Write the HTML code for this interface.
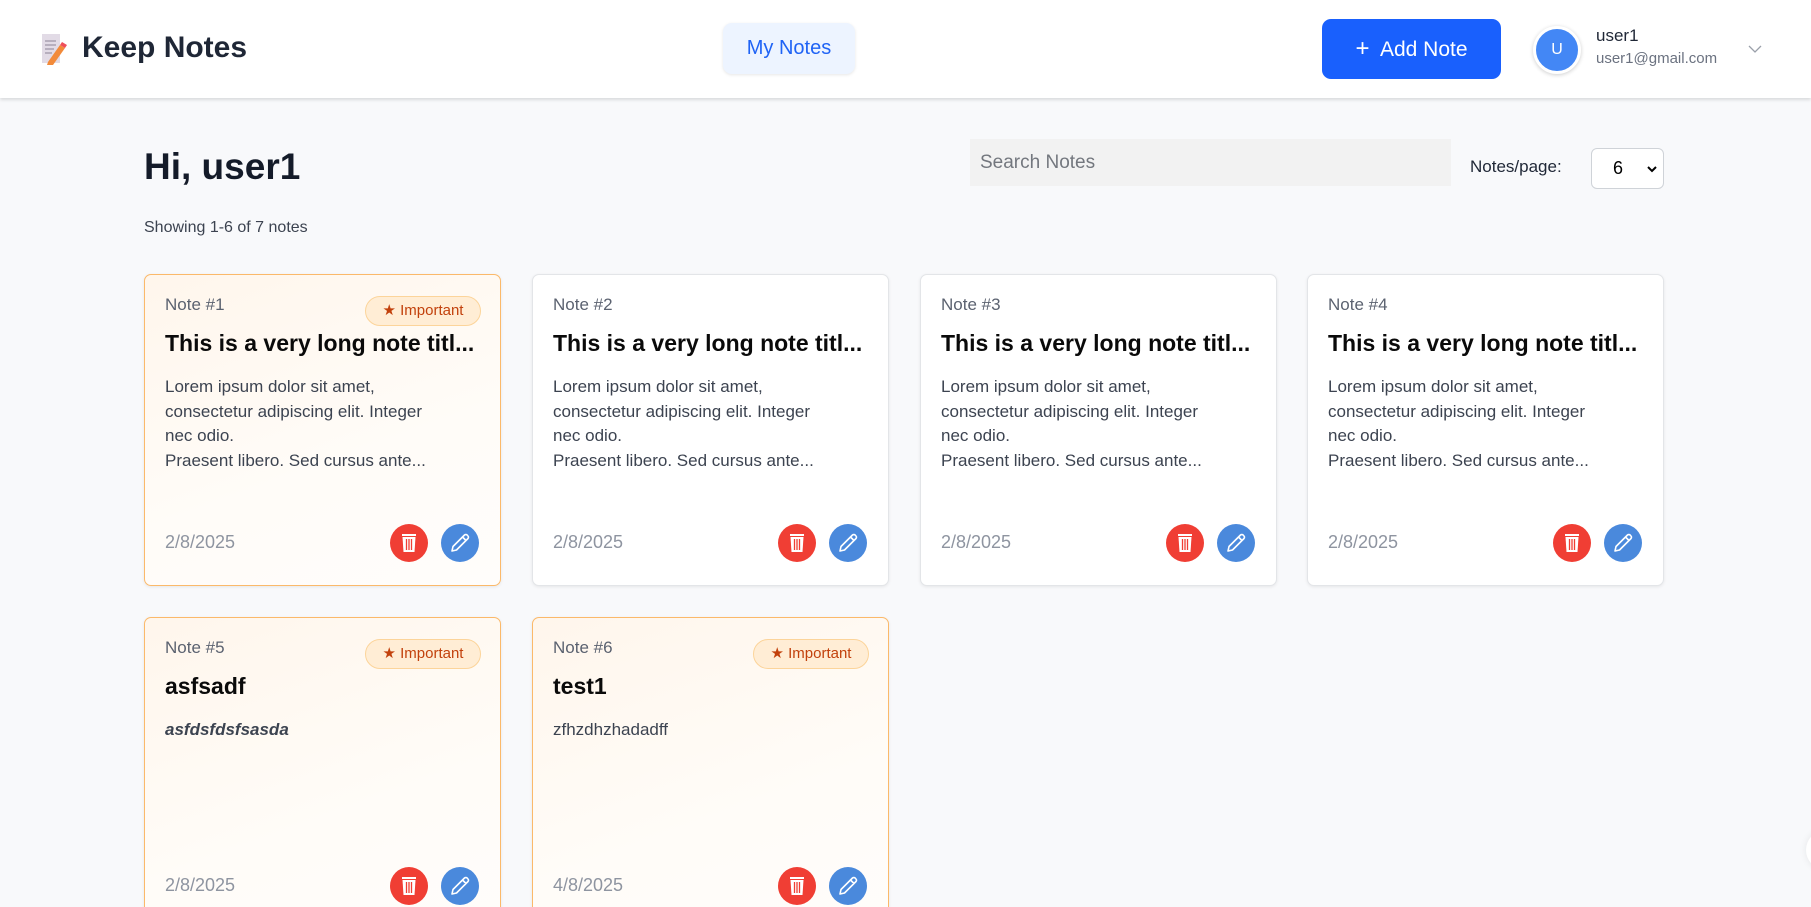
<!DOCTYPE html>
<html><head><meta charset="utf-8"><style>
*{box-sizing:border-box;margin:0;padding:0}
html,body{width:1811px;height:907px;overflow:hidden}
body{background:#f8f9fb;font-family:"Liberation Sans",sans-serif}
#w{position:relative;width:1811px;height:907px;overflow:hidden}
.hdr{position:absolute;left:0;top:0;width:1811px;height:98px;background:#fff;box-shadow:0 2px 3px rgba(0,0,0,.12)}
.abs{position:absolute}
.card{position:absolute;width:357px;border-radius:7px;background:#fff;border:1px solid #e3e5e8;box-shadow:0 1px 3px rgba(0,0,0,.08)}
.card.imp{background:linear-gradient(160deg,#fff6ec 0%,#fffcf8 60%,#fffdfb 100%);border-color:#fbb96a}
.num{position:absolute;left:20px;top:20px;font-size:17px;color:#5b6270}
.badge{position:absolute;left:220px;top:21px;width:116px;height:30px;border-radius:15px;background:#ffedd5;border:1px solid #fcd49a;color:#c2410c;font-size:15px;line-height:28px;text-align:center}
.ttl{position:absolute;left:20px;top:55px;font-size:23px;font-weight:bold;color:#0a0a0a;white-space:nowrap}
.bd{position:absolute;left:20px;top:100px;font-size:17px;line-height:24.5px;color:#3c4350;width:330px}
.dt{position:absolute;left:20px;font-size:18px;color:#8e94a0}
.del,.ed{position:absolute;width:38px;height:38px;border-radius:50%}
.del{background:#f03e34;left:245px}
.ed{background:#4a89dc;left:296px}
</style></head><body><div id="w">
<div class="hdr"></div>
<svg class="abs" style="left:42px;top:33px" width="26" height="32" viewBox="0 0 26 32"><rect x="0" y="1" width="18" height="29" fill="#e2dbe6"/><g stroke="#a9a0b0" stroke-width="1.5"><line x1="3" y1="8" x2="14" y2="8"/><line x1="3" y1="12" x2="14" y2="12"/><line x1="3" y1="16" x2="12" y2="16"/><line x1="3" y1="20" x2="10" y2="20"/></g><path d="M6 29 L18 12 L23 15 L11 32 L5 32Z" fill="#f28a3a"/><path d="M18 12 L20 9 L25 12 L23 15Z" fill="#ef4f5a"/></svg>
<div class="abs" style="left:82px;top:31px;font-size:30px;font-weight:bold;color:#1f2736">Keep Notes</div>
<div class="abs" style="left:723px;top:23px;width:132px;height:51px;border-radius:9px;background:#edf4ff;box-shadow:0 1px 3px rgba(0,0,0,.1);color:#1f63f5;font-size:20px;line-height:51px;text-align:center">My Notes</div>
<div class="abs" style="left:1322px;top:19px;width:179px;height:60px;border-radius:9px;background:#1960fd;color:#fff;font-size:21px;line-height:60px;text-align:center"><span style="font-size:24px">+</span>&nbsp; Add Note</div>
<div class="abs" style="left:1533px;top:26px;width:48px;height:48px;border-radius:50%;background:#4387f5;border:3px solid #fff;box-shadow:0 1px 4px rgba(0,0,0,.2);color:#fff;font-size:16px;line-height:42px;text-align:center">U</div>
<div class="abs" style="left:1596px;top:26px;font-size:17px;color:#1f2736">user1</div>
<div class="abs" style="left:1596px;top:50px;font-size:15px;color:#6b7280">user1@gmail.com</div>
<svg class="abs" style="left:1747px;top:44px" width="16" height="10"><path d="M2 2 L8 8 L14 2" fill="none" stroke="#9aa0aa" stroke-width="1.3"/></svg>

<div class="abs" style="left:144px;top:146px;font-size:37px;font-weight:bold;color:#141b29">Hi, user1</div>
<div class="abs" style="left:144px;top:219px;font-size:16px;color:#3c4350">Showing 1-6 of 7 notes</div>
<div class="abs" style="left:970px;top:139px;width:481px;height:47px;background:#f2f2f2;color:#73777e;font-size:19px;line-height:47px;padding-left:10px">Search Notes</div>
<div class="abs" style="left:1470px;top:157px;font-size:17px;color:#1f2736">Notes/page:</div>
<div class="abs" style="left:1591px;top:148px;width:73px;height:41px;border:1px solid #cfd3d8;border-radius:6px;background:#fff;font-size:18px;line-height:39px;padding-left:21px;color:#000">6<svg style="position:absolute;left:55px;top:17px" width="10" height="7"><path d="M1 1 L5 5 L9 1" fill="none" stroke="#000" stroke-width="2"/></svg></div>

<div class="card imp" style="left:144px;top:274px;height:312px">
<div class="num">Note #1</div><div class="badge">★ Important</div>
<div class="ttl">This is a very long note titl...</div>
<div class="bd">Lorem ipsum dolor sit amet,<br>consectetur adipiscing elit. Integer<br>nec odio.<br>Praesent libero. Sed cursus ante...</div>
<div class="dt" style="top:257px">2/8/2025</div>
<div class="del" style="top:249px"></div><div class="ed" style="top:249px"></div>
</div>
<div class="card" style="left:532px;top:274px;height:312px">
<div class="num">Note #2</div>
<div class="ttl">This is a very long note titl...</div>
<div class="bd">Lorem ipsum dolor sit amet,<br>consectetur adipiscing elit. Integer<br>nec odio.<br>Praesent libero. Sed cursus ante...</div>
<div class="dt" style="top:257px">2/8/2025</div>
<div class="del" style="top:249px"></div><div class="ed" style="top:249px"></div>
</div>
<div class="card" style="left:920px;top:274px;height:312px">
<div class="num">Note #3</div>
<div class="ttl">This is a very long note titl...</div>
<div class="bd">Lorem ipsum dolor sit amet,<br>consectetur adipiscing elit. Integer<br>nec odio.<br>Praesent libero. Sed cursus ante...</div>
<div class="dt" style="top:257px">2/8/2025</div>
<div class="del" style="top:249px"></div><div class="ed" style="top:249px"></div>
</div>
<div class="card" style="left:1307px;top:274px;height:312px">
<div class="num">Note #4</div>
<div class="ttl">This is a very long note titl...</div>
<div class="bd">Lorem ipsum dolor sit amet,<br>consectetur adipiscing elit. Integer<br>nec odio.<br>Praesent libero. Sed cursus ante...</div>
<div class="dt" style="top:257px">2/8/2025</div>
<div class="del" style="top:249px"></div><div class="ed" style="top:249px"></div>
</div>
<div class="card imp" style="left:144px;top:617px;height:330px">
<div class="num">Note #5</div><div class="badge">★ Important</div>
<div class="ttl">asfsadf</div>
<div class="bd" style="font-style:italic;font-weight:bold;color:#3c4350">asfdsfdsfsasda</div>
<div class="dt" style="top:257px">2/8/2025</div>
<div class="del" style="top:249px"></div><div class="ed" style="top:249px"></div>
</div>
<div class="card imp" style="left:532px;top:617px;height:330px">
<div class="num">Note #6</div><div class="badge">★ Important</div>
<div class="ttl">test1</div>
<div class="bd">zfhzdhzhadadff</div>
<div class="dt" style="top:257px">4/8/2025</div>
<div class="del" style="top:249px"></div><div class="ed" style="top:249px"></div>
</div>
<div class="abs" style="left:1806px;top:830px;width:40px;height:40px;border-radius:50%;background:#fff;box-shadow:0 0 8px rgba(0,0,0,.08)"></div>
</div>
<svg width="0" height="0" style="position:absolute">
<defs>
<symbol id="tr" viewBox="0 0 38 38"><rect x="12" y="10" width="14" height="2" fill="#fff"/><path d="M12.5 13 H25.5 L24.5 28 H13.5Z" fill="#fff"/><g stroke="#f03e34" stroke-width="1.3"><line x1="16.5" y1="15" x2="16.5" y2="26"/><line x1="19" y1="15" x2="19" y2="26"/><line x1="21.5" y1="15" x2="21.5" y2="26"/></g></symbol>
<symbol id="pn" viewBox="0 0 38 38"><path d="M11 27 L12 22.5 L23.5 11 A2 2 0 0 1 26.5 11.5 L26.5 11.5 A2 2 0 0 1 27 14.5 L15.5 26 Z M21.5 13 L25 16.5" fill="none" stroke="#fff" stroke-width="1.6" stroke-linejoin="round"/></symbol>
</defs></svg>
<script>
document.querySelectorAll('.del').forEach(e=>e.innerHTML='<svg width="38" height="38"><use href="#tr"/></svg>');
document.querySelectorAll('.ed').forEach(e=>e.innerHTML='<svg width="38" height="38"><use href="#pn"/></svg>');
</script>
</body></html>
